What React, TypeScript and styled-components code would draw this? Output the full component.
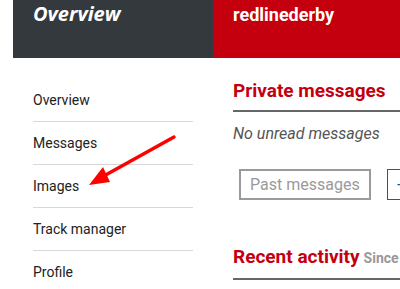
import styled, { createGlobalStyle } from 'styled-components';

const GlobalStyle = createGlobalStyle`
  html, body {
    margin: 0;
    padding: 0;
    background: #fff;
    overflow: hidden;
  }
  body {
    font-family: 'Roboto', 'Liberation Sans', sans-serif;
  }
`;

const Page = styled.div`
  position: relative;
  width: 400px;
  height: 289px;
  padding-left: 13px;
  box-sizing: border-box;
  display: grid;
  grid-template-columns: 200px 1fr;
  grid-template-rows: 58px 1fr;
  overflow: hidden;
`;

const SideHead = styled.div`
  background: #33393c;
  padding: 2px 20px 0;
`;

const SideTitle = styled.h1`
  margin: 0;
  font-family: 'Open Sans', sans-serif;
  font-style: italic;
  font-weight: 700;
  font-size: 20px;
  line-height: 24px;
  color: #fff;
`;

const MainHead = styled.div`
  background: #c4000f;
  padding: 4px 20px 0;
`;

const UserName = styled.div`
  font-family: 'Roboto', sans-serif;
  font-weight: 700;
  font-size: 18px;
  line-height: 22px;
  color: #fff;
`;

const SideNav = styled.nav`
  padding: 21px 20px 0;
`;

const NavItem = styled.div<{ $last?: boolean }>`
  font-size: 14px;
  line-height: 18px;
  padding: 12px 0;
  color: #222;
  border-bottom: ${(p) => (p.$last ? 'none' : '1px solid #d8d8d8')};
`;

const Main = styled.main`
  padding: 21px 0 0 20px;
  white-space: nowrap;
  overflow: hidden;
`;

const SectionTitle = styled.h2`
  margin: 0;
  font-size: 19px;
  line-height: 23px;
  font-weight: 700;
  color: #c4000f;
  padding-bottom: 8px;
  border-bottom: 2px solid #666;
`;

const Since = styled.span`
  font-size: 14px;
  font-weight: 700;
  color: #999;
  margin-left: 4px;
`;

const Empty = styled.p`
  margin: 12px 0 0;
  font-size: 16px;
  font-style: italic;
  color: #555;
  line-height: 20px;
`;

const Buttons = styled.div`
  display: flex;
  gap: 16px;
  margin: 25px 0 0 6px;
`;

const Button = styled.button<{ $tone: 'gray' | 'blue' }>`
  height: 31px;
  box-sizing: border-box;
  padding: 0 9px;
  flex-shrink: 0;
  background: #fff;
  font-family: 'Roboto', sans-serif;
  font-size: 16px;
  color: ${(p) => (p.$tone === 'blue' ? '#1c55b5' : '#9a9a9a')};
  border: 2px solid ${(p) => (p.$tone === 'blue' ? '#1c55b5' : '#9a9a9a')};
  border-width: ${(p) => (p.$tone === 'blue' ? '1px' : '2px')};
`;

const Recent = styled.div`
  margin-top: 45px;
`;

const Arrow = styled.svg`
  position: absolute;
  left: 0;
  top: 0;
  pointer-events: none;
`;

export default function App() {
  return (
    <>
      <GlobalStyle />
      <Page>
        <SideHead>
          <SideTitle>Overview</SideTitle>
        </SideHead>
        <MainHead>
          <UserName>redlinederby</UserName>
        </MainHead>
        <SideNav>
          <NavItem>Overview</NavItem>
          <NavItem>Messages</NavItem>
          <NavItem>Images</NavItem>
          <NavItem>Track manager</NavItem>
          <NavItem $last>Profile</NavItem>
        </SideNav>
        <Main>
          <SectionTitle>Private messages</SectionTitle>
          <Empty>No unread messages</Empty>
          <Buttons>
            <Button $tone="gray">Past messages</Button>
            <Button $tone="blue">+ New message</Button>
          </Buttons>
          <Recent>
            <SectionTitle>
              Recent activity<Since>Since your last visit</Since>
            </SectionTitle>
          </Recent>
        </Main>
        <Arrow width="400" height="289" viewBox="0 0 400 289">
          <line x1="174" y1="137" x2="102" y2="177" stroke="#f00" strokeWidth="3.5" strokeLinecap="round" />
          <polygon points="89,185 103,167 110,182" fill="#f00" />
        </Arrow>
      </Page>
    </>
  );
}
